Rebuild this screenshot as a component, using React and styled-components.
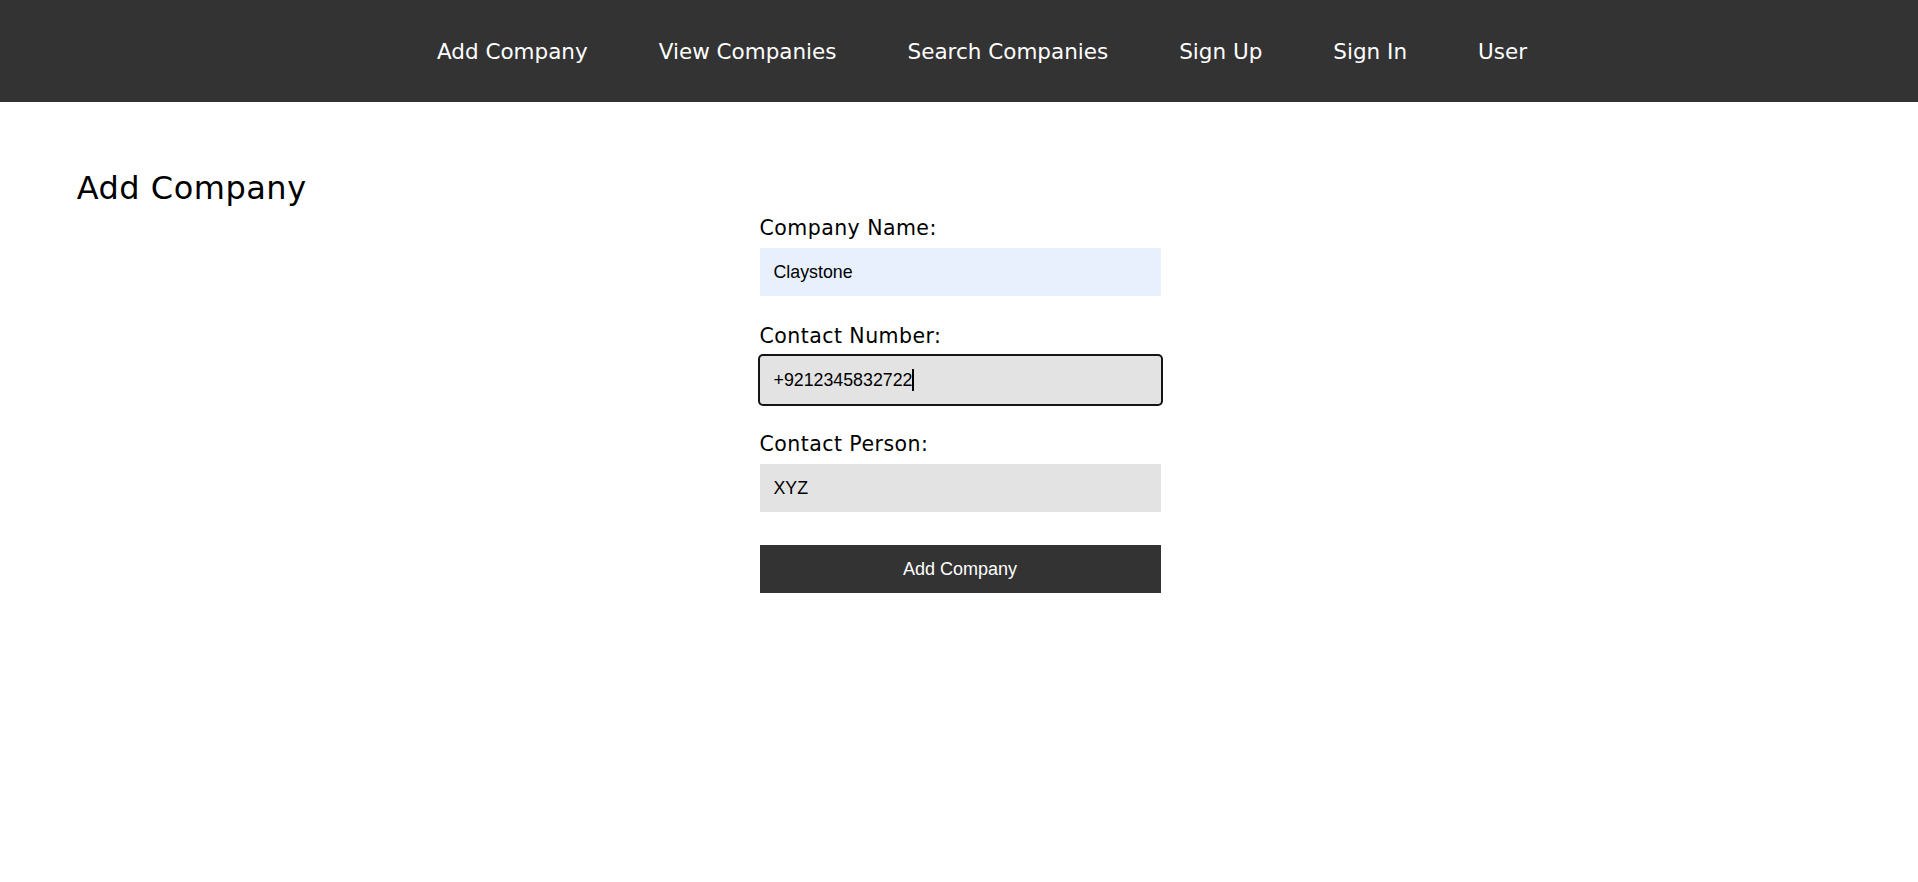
import { createGlobalStyle, styled } from 'styled-components';

const GlobalStyle = createGlobalStyle`
    * {
        box-sizing: border-box;
    }
    body {
        margin: 0;
        background-color: #ffffff;
        font-family: "DejaVu Sans", "Noto Sans", sans-serif;
        color: #000000;
    }
`;

const NavBar = styled.nav`
    height: 102px;
    background-color: #333333;
    display: flex;
    align-items: center;
    justify-content: center;
    padding-left: 46px;
`;

const NavList = styled.ul`
    display: flex;
    align-items: center;
    list-style: none;
    margin: 0;
    padding: 0;
`;

const NavItem = styled.li`
    margin: 0 35.5px;
`;

const NavLink = styled.a`
    color: #ffffff;
    font-size: 21.5px;
    font-weight: 400;
    text-decoration: none;
    cursor: pointer;
`;

const Main = styled.main`
    padding: 68px 4% 0;
`;

const Title = styled.h1`
    margin: 0;
    font-size: 32px;
    font-weight: 400;
    letter-spacing: 0.5px;
    line-height: 37px;
`;

const Form = styled.form`
    width: 401px;
    margin: 10px auto 0;
    display: flex;
    flex-direction: column;
    transform: translateX(1px);
`;

const Field = styled.div`
    display: flex;
    flex-direction: column;
    margin-bottom: 29px;
`;

const Label = styled.label`
    font-size: 20.5px;
    letter-spacing: 0.45px;
    line-height: 23px;
    margin-bottom: 8px;
`;

const InputWrap = styled.div`
    position: relative;
    display: flex;
    flex-direction: column;
`;

const Input = styled.input`
    height: 48px;
    padding: 0 14px;
    border: none;
    border-radius: ${(p) => (p.$active ? '3px' : '0')};
    background-color: ${(p) => (p.$autofill ? '#e8f0fe' : '#e3e3e3')};
    box-shadow: ${(p) => (p.$active ? '0 0 0 2px #151515' : 'none')};
    font-family: "Liberation Sans", Arial, sans-serif;
    font-size: 17.8px;
    color: #000000;
    caret-color: transparent;
    outline: none;
`;

/* text caret drawn over the focused field */
const Caret = styled.span`
    position: absolute;
    top: 13px;
    left: 152px;
    width: 2px;
    height: 22px;
    background-color: #000000;
    pointer-events: none;
`;

const SubmitButton = styled.button`
    height: 48px;
    margin-top: 4px;
    border: none;
    background-color: #333333;
    color: #ffffff;
    font-family: "Liberation Sans", Arial, sans-serif;
    font-size: 18px;
    cursor: pointer;
`;

const links = ['Add Company', 'View Companies', 'Search Companies', 'Sign Up', 'Sign In', 'User'];

export default function App() {
    const handleSubmit = (e) => {
        e.preventDefault();
    };

    return (
        <>
            <GlobalStyle />
            <NavBar>
                <NavList>
                    {links.map((link) => (
                        <NavItem key={link}>
                            <NavLink>{link}</NavLink>
                        </NavItem>
                    ))}
                </NavList>
            </NavBar>
            <Main>
                <Title>Add Company</Title>
                <Form onSubmit={handleSubmit}>
                    <Field>
                        <Label htmlFor="name">Company Name:</Label>
                        <Input id="name" type="text" defaultValue="Claystone" $autofill />
                    </Field>
                    <Field>
                        <Label htmlFor="number">Contact Number:</Label>
                        <InputWrap>
                            <Input id="number" type="text" defaultValue="+9212345832722" $active />
                            <Caret />
                        </InputWrap>
                    </Field>
                    <Field>
                        <Label htmlFor="person">Contact Person:</Label>
                        <Input id="person" type="text" defaultValue="XYZ" />
                    </Field>
                    <SubmitButton type="submit">Add Company</SubmitButton>
                </Form>
            </Main>
        </>
    );
}
